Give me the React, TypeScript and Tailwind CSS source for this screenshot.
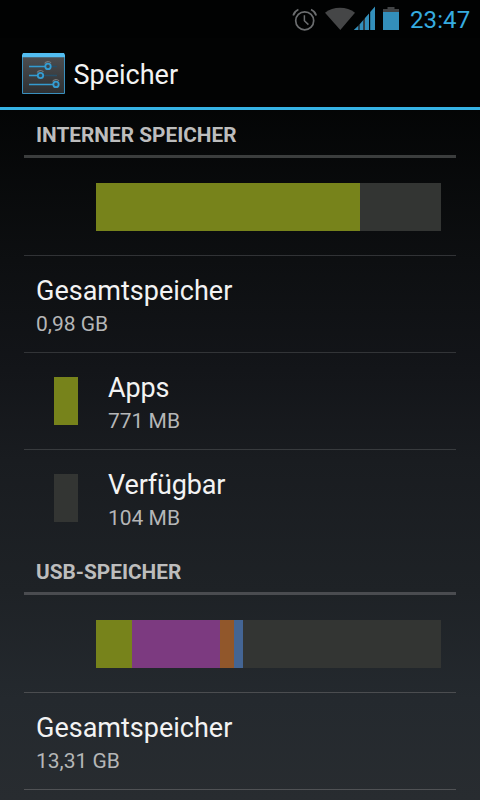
import React from 'react'

type Segment = { width: number; color: string }

const internalUsage: Segment[] = [
  { width: 264, color: 'bg-[#77831b]' },
]

const usbUsage: Segment[] = [
  { width: 36, color: 'bg-[#77831b]' },
  { width: 88, color: 'bg-[#7c3a80]' },
  { width: 14, color: 'bg-[#91572b]' },
  { width: 9, color: 'bg-[#446594]' },
]

const AlarmIcon = () => (
  <svg width="26" height="26" viewBox="0 0 26 26" fill="none" stroke="#6b6d6f" className="shrink-0">
    <circle cx="12.7" cy="14.8" r="9" strokeWidth="1.7" />
    <path d="M12.4 9.2v5.6l4 3.8" strokeWidth="1.5" />
    <path d="M1.2 9.4C2 6.8 3.8 4.8 6.4 3.6M24.2 9.4C23.4 6.8 21.6 4.8 19 3.6" strokeWidth="1.7" />
  </svg>
)

const WifiIcon = () => (
  <svg width="30" height="24" viewBox="0 0 30 24" className="shrink-0">
    <path d="M0 5.8C8-.8 22-.8 30 5.8L15.3 23z" fill="#454647" />
  </svg>
)

const SignalIcon = () => (
  <svg width="22" height="24" viewBox="0 0 22 24" fill="#338fbb" className="shrink-0">
    <path d="M-.2 24L4.5 19.4V24zM5.5 24v-5.6l4-4.6V24zM11 24V12l4-4.6V24zM16.2 24V6L21 .5V24z" />
    <path d="M4.5 24v-4.6l1-1V24zM9.5 24V13.8l1.5-1.8V24z" fill="#373b3e" />
  </svg>
)

const BatteryIcon = () => (
  <svg width="16" height="24" viewBox="0 0 16 24" className="shrink-0">
    <path d="M0 2h4.5V0h7v2H16v4H0z" fill="#424446" />
    <path d="M0 5h16v18H0z" fill="#338fbb" />
  </svg>
)

const SettingsIcon = () => (
  <svg width="44" height="42" viewBox="0 0 44 42" fill="none" className="shrink-0">
    <defs>
      <linearGradient id="panel" x1="0" y1="0" x2="0" y2="1">
        <stop offset="0" stopColor="#4c4e51" />
        <stop offset="1" stopColor="#2e3032" />
      </linearGradient>
    </defs>
    <path d="M.5 3h42v37.5H.5z" fill="url(#panel)" stroke="#398fbd" />
    <path d="M0 2L1 0h41l1 2v2.3H0z" fill="#52bdf1" />
    <path d="M7 13.5h28M7 22.5h28" stroke="#274f69" strokeWidth="1.3" />
    <path d="M7 13.5h18M7 22.5h10M7 31.5h25" stroke="#349bd0" strokeWidth="1.3" />
    <path d="M22.6 10.6a3.8 3.8 0 016.4-.6M15.1 19.6a3.8 3.8 0 016.4-.6M30.6 28.6a3.8 3.8 0 016.4-.6" stroke="#77797b" strokeWidth="1.2" />
    <g fill="#3b474f" stroke="#349dd3" strokeWidth="1.8">
      <circle cx="26" cy="13.4" r="2.7" />
      <circle cx="18.5" cy="22.5" r="2.7" />
      <circle cx="34" cy="31.4" r="2.7" />
    </g>
  </svg>
)

const SectionHeader = ({ title, first }: { title: string; first?: boolean }) => (
  <h2 className={`mx-6 pl-3 border-b-3 text-[20.8px] leading-[25px] font-bold text-[#bdbdbd] whitespace-nowrap
                  ${first ? 'h-12 pt-[13px] border-[#3b3d3d]' : 'h-[49px] pt-[14px] border-[#4a4c50]'}`}>
    {title}
  </h2>
)

const UsageBar = ({ segments, line }: { segments: Segment[]; line: string }) => (
  <div className={`mx-6 h-[98px] pt-[25px] pl-[72px] border-b ${line}`}>
    <div className="flex w-[345px] h-12 bg-[#333533]">
      {segments.map((s) => (
        <div key={s.color} className={s.color} style={{ width: s.width }} />
      ))}
    </div>
  </div>
)

const Row = ({ title, summary, swatch, line }: {
  title: string
  summary: string
  swatch?: string
  line?: string
}) => (
  <div className={`mx-6 flex pl-3 ${line ? `h-[97px] border-b ${line}` : 'h-24'}`}>
    {swatch && <div className={`ml-[18px] mr-[30px] mt-6 w-6 h-12 ${swatch}`} />}
    <div className="pt-[19px] whitespace-nowrap">
      <div className={`text-[27px] leading-8 text-[#f3f3f3] ${swatch ? 'tracking-[-0.15px]' : ''}`}>{title}</div>
      <div className="mt-px text-[21px] leading-8 text-[#b5b6b7]">{summary}</div>
    </div>
  </div>
)

export default function App() {
  return (
    <div className="w-[480px] h-[800px] overflow-hidden font-['Roboto',sans-serif]
                    bg-[linear-gradient(#020303_80px,#0d0f11_260px,#131519_370px,#191c20_460px,#1e2226_590px,#24292e_700px,#282c30_800px)]">
      {/* status bar */}
      <div className="h-[38px] flex items-start bg-[#010202] pl-[292px]">
        <div className="pt-[6px]"><AlarmIcon /></div>
        <div className="pt-[7px] ml-[7px]"><WifiIcon /></div>
        <div className="pt-[6px] -ml-[1px]"><SignalIcon /></div>
        <div className="pt-[7px] ml-[7px]"><BatteryIcon /></div>
        <div className="ml-[11px] pt-[4px] text-[24px] leading-8 tracking-[0.1px] text-[#36ace0]">23:47</div>
      </div>

      {/* action bar */}
      <div className="h-[72px] flex items-start bg-[#020303] border-b-3 border-[#36b3e5] pl-[22px] gap-[7.5px]">
        <div className="pt-[15px]"><SettingsIcon /></div>
        <h1 className="pt-[21px] text-[27px] leading-8 text-[#f3f3f3]">Speicher</h1>
      </div>

      <SectionHeader title="INTERNER SPEICHER" first />
      <UsageBar segments={internalUsage} line="border-[#313336]" />
      <Row title="Gesamtspeicher" summary="0,98 GB" line="border-[#323437]" />
      <Row title="Apps" summary="771 MB" swatch="bg-[#77831b]" line="border-[#383b3e]" />
      <Row title="Verfügbar" summary="104 MB" swatch="bg-[#333533]" />

      <SectionHeader title="USB-SPEICHER" />
      <UsageBar segments={usbUsage} line="border-[#4b4d50]" />
      <Row title="Gesamtspeicher" summary="13,31 GB" line="border-[#505255]" />
    </div>
  )
}
